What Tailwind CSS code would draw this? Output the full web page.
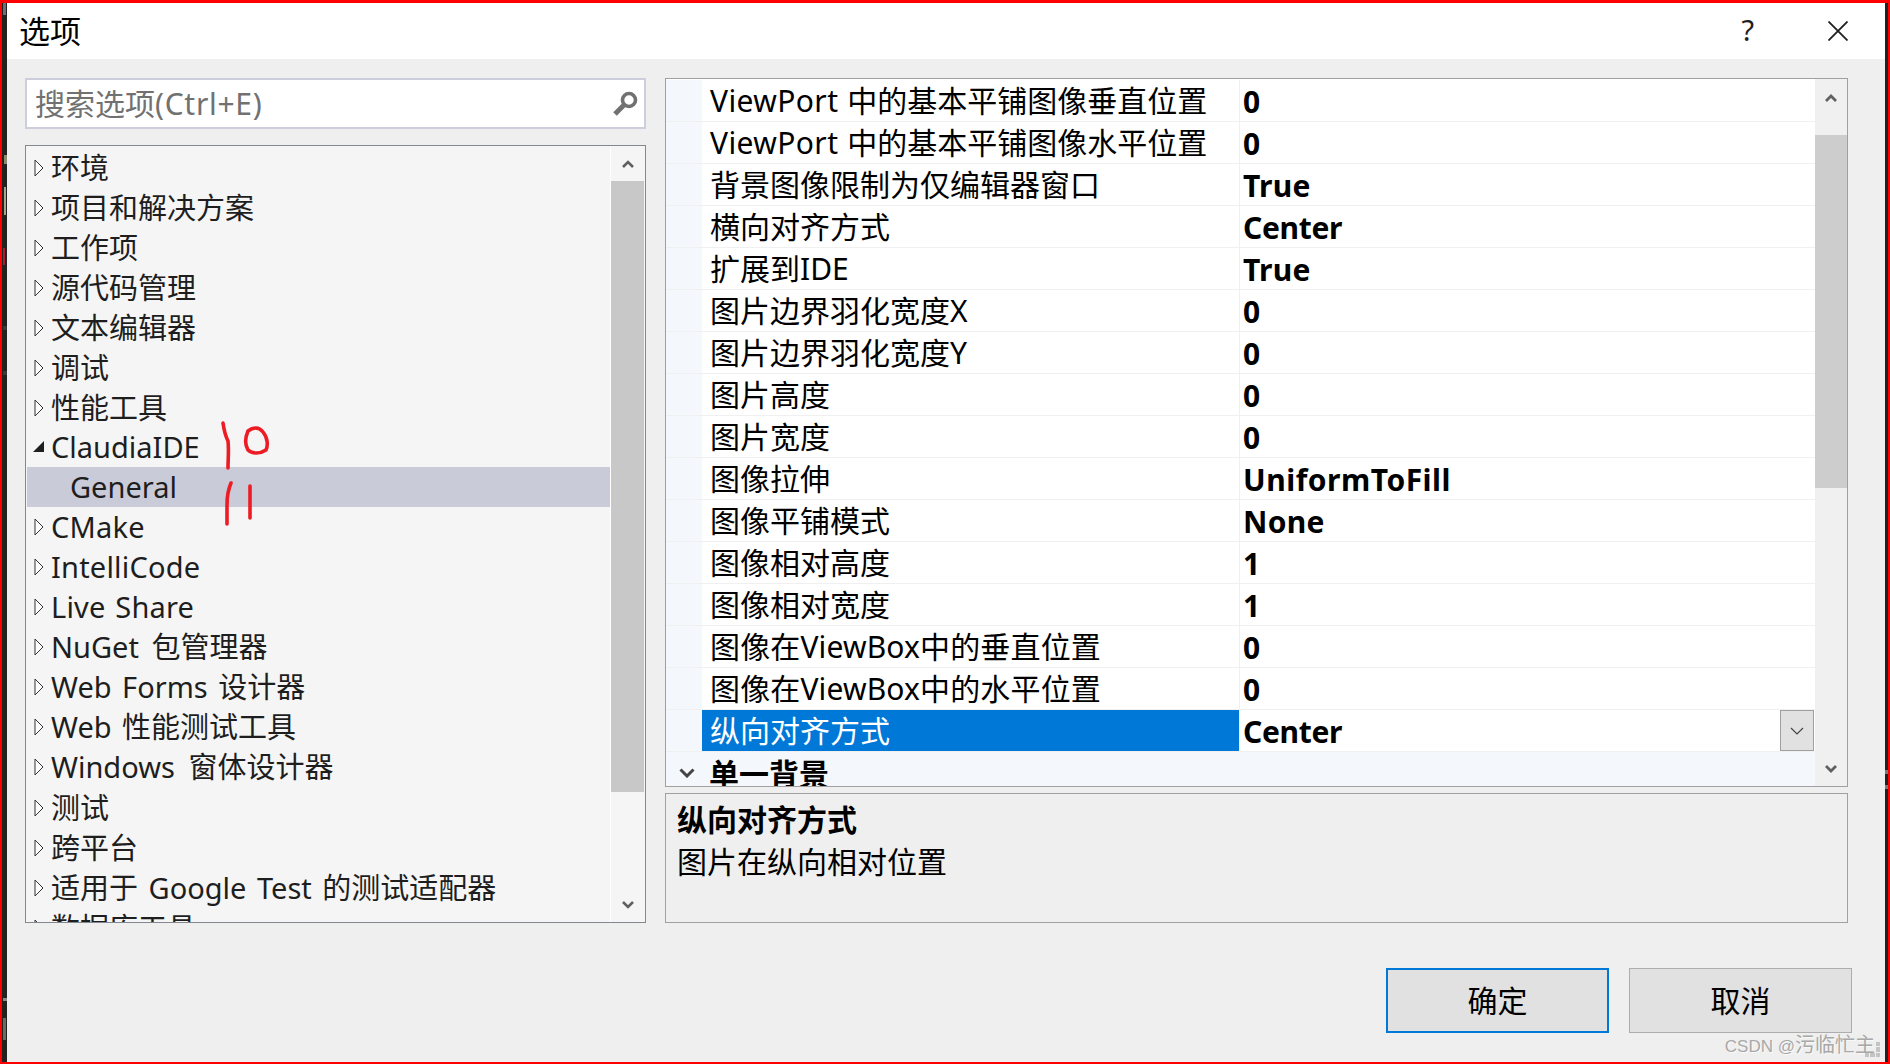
<!DOCTYPE html>
<html lang="zh-CN">
<head>
    <meta charset="UTF-8">
    <title>选项</title>
    <script src="https://cdn.jsdelivr.net/npm/@tailwindcss/browser@4"></script>
</head>
<body class="m-0 overflow-hidden">
<div class="relative w-[1890px] h-[1064px] overflow-hidden flex bg-[#222222] border-t-[3px] border-l-[2px] border-r-[2px] border-b-[2px] border-[#ff0000] font-['Noto_Sans','Noto_Sans_CJK_SC',sans-serif] text-[29px] text-[#1e1e1e]">
    <div class="w-[5px] shrink-0"></div>
    <div class="w-[1878px] h-[1059px] shrink-0 flex flex-col bg-[#efefef]">
        <!-- title bar -->
        <div class="h-[56px] bg-white flex items-center pl-[12px] shrink-0">
            <span class="text-[31px] text-black leading-none">选项</span>
            <span class="ml-auto text-[29px] leading-none text-[#1e1e1e] pb-[3px]">?</span>
            <svg class="ml-[74px] mr-[37px]" width="20" height="20" viewBox="0 0 20 20"><path d="M0.5 0.5L19.5 19.5M19.5 0.5L0.5 19.5" stroke="#1e1e1e" stroke-width="1.8" fill="none"/></svg>
        </div>

        <div class="flex gap-[19px] pl-[18px] pr-[37px] pt-[19px]">
            <!-- left column -->
            <div class="w-[621px] flex flex-col gap-[16px] shrink-0">
                <div class="h-[51px] bg-white border-2 border-[#cccedb] flex items-center pl-[8px] pr-[6px]">
                    <span class="text-[30px] text-[#717171] leading-none whitespace-nowrap">搜索选项<span class="tracking-[0.7px]">(Ctrl+E)</span></span>
                    <svg class="ml-auto" width="26" height="26" viewBox="0 0 26 26"><circle cx="17" cy="9" r="6.5" stroke="#717171" stroke-width="3.6" fill="none"/><path d="M12 14L3 23" stroke="#717171" stroke-width="5" fill="none"/></svg>
                </div>
                <div class="h-[778px] bg-[#f5f5f5] border border-[#828790] flex overflow-hidden">
                    <div class="w-[584px] shrink-0 pt-[1px] pl-[1px] overflow-hidden">
                        <div class="h-[40px] pt-[2px] flex items-center whitespace-nowrap"><svg class="ml-[7px] mr-[7px] shrink-0" width="10" height="18" viewBox="0 0 10 18"><path d="M1 1L9 9L1 17Z" fill="#fff" stroke="#333" stroke-width="1"/></svg>环境</div>
                        <div class="h-[40px] pt-[2px] flex items-center whitespace-nowrap"><svg class="ml-[7px] mr-[7px] shrink-0" width="10" height="18" viewBox="0 0 10 18"><path d="M1 1L9 9L1 17Z" fill="#fff" stroke="#333" stroke-width="1"/></svg>项目和解决方案</div>
                        <div class="h-[40px] pt-[2px] flex items-center whitespace-nowrap"><svg class="ml-[7px] mr-[7px] shrink-0" width="10" height="18" viewBox="0 0 10 18"><path d="M1 1L9 9L1 17Z" fill="#fff" stroke="#333" stroke-width="1"/></svg>工作项</div>
                        <div class="h-[40px] pt-[2px] flex items-center whitespace-nowrap"><svg class="ml-[7px] mr-[7px] shrink-0" width="10" height="18" viewBox="0 0 10 18"><path d="M1 1L9 9L1 17Z" fill="#fff" stroke="#333" stroke-width="1"/></svg>源代码管理</div>
                        <div class="h-[40px] pt-[2px] flex items-center whitespace-nowrap"><svg class="ml-[7px] mr-[7px] shrink-0" width="10" height="18" viewBox="0 0 10 18"><path d="M1 1L9 9L1 17Z" fill="#fff" stroke="#333" stroke-width="1"/></svg>文本编辑器</div>
                        <div class="h-[40px] pt-[2px] flex items-center whitespace-nowrap"><svg class="ml-[7px] mr-[7px] shrink-0" width="10" height="18" viewBox="0 0 10 18"><path d="M1 1L9 9L1 17Z" fill="#fff" stroke="#333" stroke-width="1"/></svg>调试</div>
                        <div class="h-[40px] pt-[2px] flex items-center whitespace-nowrap"><svg class="ml-[7px] mr-[7px] shrink-0" width="10" height="18" viewBox="0 0 10 18"><path d="M1 1L9 9L1 17Z" fill="#fff" stroke="#333" stroke-width="1"/></svg>性能工具</div>
                        <div class="h-[40px] flex items-center whitespace-nowrap"><svg class="ml-[6px] mr-[6px] shrink-0" width="12" height="18" viewBox="0 0 12 18"><path d="M0 14L11 3V14Z" fill="#1e1e1e"/></svg>ClaudiaIDE</div>
                        <div class="h-[40px] flex items-center whitespace-nowrap bg-[#cacbd9] pl-[43px]">General</div>
                        <div class="h-[40px] flex items-center whitespace-nowrap tracking-[0.2px]"><svg class="ml-[7px] mr-[7px] shrink-0" width="10" height="18" viewBox="0 0 10 18"><path d="M1 1L9 9L1 17Z" fill="#fff" stroke="#333" stroke-width="1"/></svg>CMake</div>
                        <div class="h-[40px] flex items-center whitespace-nowrap tracking-[0.2px]"><svg class="ml-[7px] mr-[7px] shrink-0" width="10" height="18" viewBox="0 0 10 18"><path d="M1 1L9 9L1 17Z" fill="#fff" stroke="#333" stroke-width="1"/></svg>IntelliCode</div>
                        <div class="h-[40px] flex items-center whitespace-pre tracking-[0.2px] [word-spacing:2px]"><svg class="ml-[7px] mr-[7px] shrink-0" width="10" height="18" viewBox="0 0 10 18"><path d="M1 1L9 9L1 17Z" fill="#fff" stroke="#333" stroke-width="1"/></svg>Live Share</div>
                        <div class="h-[40px] flex items-center whitespace-pre [word-spacing:5px]"><svg class="ml-[7px] mr-[7px] shrink-0" width="10" height="18" viewBox="0 0 10 18"><path d="M1 1L9 9L1 17Z" fill="#fff" stroke="#333" stroke-width="1"/></svg>NuGet 包管理器</div>
                        <div class="h-[40px] flex items-center whitespace-pre [word-spacing:3px]"><svg class="ml-[7px] mr-[7px] shrink-0" width="10" height="18" viewBox="0 0 10 18"><path d="M1 1L9 9L1 17Z" fill="#fff" stroke="#333" stroke-width="1"/></svg>Web Forms 设计器</div>
                        <div class="h-[40px] flex items-center whitespace-pre [word-spacing:3px]"><svg class="ml-[7px] mr-[7px] shrink-0" width="10" height="18" viewBox="0 0 10 18"><path d="M1 1L9 9L1 17Z" fill="#fff" stroke="#333" stroke-width="1"/></svg>Web 性能测试工具</div>
                        <div class="h-[40px] flex items-center whitespace-pre [word-spacing:6px]"><svg class="ml-[7px] mr-[7px] shrink-0" width="10" height="18" viewBox="0 0 10 18"><path d="M1 1L9 9L1 17Z" fill="#fff" stroke="#333" stroke-width="1"/></svg>Windows 窗体设计器</div>
                        <div class="h-[40px] pt-[2px] flex items-center whitespace-nowrap"><svg class="ml-[7px] mr-[7px] shrink-0" width="10" height="18" viewBox="0 0 10 18"><path d="M1 1L9 9L1 17Z" fill="#fff" stroke="#333" stroke-width="1"/></svg>测试</div>
                        <div class="h-[40px] pt-[2px] flex items-center whitespace-nowrap"><svg class="ml-[7px] mr-[7px] shrink-0" width="10" height="18" viewBox="0 0 10 18"><path d="M1 1L9 9L1 17Z" fill="#fff" stroke="#333" stroke-width="1"/></svg>跨平台</div>
                        <div class="h-[40px] pt-[2px] flex items-center whitespace-pre [word-spacing:3px]"><svg class="ml-[7px] mr-[7px] shrink-0" width="10" height="18" viewBox="0 0 10 18"><path d="M1 1L9 9L1 17Z" fill="#fff" stroke="#333" stroke-width="1"/></svg>适用于 Google Test 的测试适配器</div>
                        <div class="h-[40px] pt-[2px] flex items-center whitespace-nowrap"><svg class="ml-[7px] mr-[7px] shrink-0" width="10" height="18" viewBox="0 0 10 18"><path d="M1 1L9 9L1 17Z" fill="#fff" stroke="#333" stroke-width="1"/></svg>数据库工具</div>
                    </div>
                    <!-- tree scrollbar -->
                    <div class="w-[35px] shrink-0 flex flex-col border-l border-white pr-[1px]">
                        <div class="h-[35px] flex items-center justify-center shrink-0 w-full"><svg width="12" height="8" viewBox="0 0 12 8"><path d="M1 7L6 2L11 7" stroke="#606060" stroke-width="2.6" fill="none"/></svg></div>
                        <div class="w-[33px] h-[611px] bg-[#c8c8c8] shrink-0"></div>
                        <div class="h-[130px] w-full flex items-center justify-center pt-[95px]"><svg width="12" height="8" viewBox="0 0 12 8"><path d="M1 1L6 6L11 1" stroke="#606060" stroke-width="2.6" fill="none"/></svg></div>
                    </div>
                </div>
            </div>

            <!-- right column -->
            <div class="w-[1183px] flex flex-col gap-[6px] shrink-0">
                <div class="h-[709px] bg-white border border-[#a0a0a0] flex overflow-hidden">
                    <div class="w-[1149px] shrink-0 overflow-hidden text-black text-[30px] pt-[1px]">
                        <div class="h-[42px] flex items-center border-b border-[#f0f0f0] bg-white"><div class="w-[36px] h-full bg-[#f4f7fb] shrink-0"></div><div class="w-[537px] pl-[8px] whitespace-pre [word-spacing:1px]"><span class="tracking-[0.4px]">ViewPort</span> 中的基本平铺图像垂直位置</div><div class="pl-[3px] pt-[2px] font-bold border-l border-[#f0f0f0] h-full flex items-center">0</div></div>
                        <div class="h-[42px] flex items-center border-b border-[#f0f0f0] bg-white"><div class="w-[36px] h-full bg-[#f4f7fb] shrink-0"></div><div class="w-[537px] pl-[8px] whitespace-pre [word-spacing:1px]"><span class="tracking-[0.4px]">ViewPort</span> 中的基本平铺图像水平位置</div><div class="pl-[3px] pt-[2px] font-bold border-l border-[#f0f0f0] h-full flex items-center">0</div></div>
                        <div class="h-[42px] flex items-center border-b border-[#f0f0f0] bg-white"><div class="w-[36px] h-full bg-[#f4f7fb] shrink-0"></div><div class="w-[537px] pl-[8px]">背景图像限制为仅编辑器窗口</div><div class="pl-[3px] pt-[2px] font-bold border-l border-[#f0f0f0] h-full flex items-center tracking-[0.3px]">True</div></div>
                        <div class="h-[42px] flex items-center border-b border-[#f0f0f0] bg-white"><div class="w-[36px] h-full bg-[#f4f7fb] shrink-0"></div><div class="w-[537px] pl-[8px]">横向对齐方式</div><div class="pl-[3px] pt-[2px] font-bold border-l border-[#f0f0f0] h-full flex items-center tracking-[-0.3px]">Center</div></div>
                        <div class="h-[42px] flex items-center border-b border-[#f0f0f0] bg-white"><div class="w-[36px] h-full bg-[#f4f7fb] shrink-0"></div><div class="w-[537px] pl-[8px]">扩展到IDE</div><div class="pl-[3px] pt-[2px] font-bold border-l border-[#f0f0f0] h-full flex items-center tracking-[0.3px]">True</div></div>
                        <div class="h-[42px] flex items-center border-b border-[#f0f0f0] bg-white"><div class="w-[36px] h-full bg-[#f4f7fb] shrink-0"></div><div class="w-[537px] pl-[8px]">图片边界羽化宽度X</div><div class="pl-[3px] pt-[2px] font-bold border-l border-[#f0f0f0] h-full flex items-center">0</div></div>
                        <div class="h-[42px] flex items-center border-b border-[#f0f0f0] bg-white"><div class="w-[36px] h-full bg-[#f4f7fb] shrink-0"></div><div class="w-[537px] pl-[8px]">图片边界羽化宽度Y</div><div class="pl-[3px] pt-[2px] font-bold border-l border-[#f0f0f0] h-full flex items-center">0</div></div>
                        <div class="h-[42px] flex items-center border-b border-[#f0f0f0] bg-white"><div class="w-[36px] h-full bg-[#f4f7fb] shrink-0"></div><div class="w-[537px] pl-[8px]">图片高度</div><div class="pl-[3px] pt-[2px] font-bold border-l border-[#f0f0f0] h-full flex items-center">0</div></div>
                        <div class="h-[42px] flex items-center border-b border-[#f0f0f0] bg-white"><div class="w-[36px] h-full bg-[#f4f7fb] shrink-0"></div><div class="w-[537px] pl-[8px]">图片宽度</div><div class="pl-[3px] pt-[2px] font-bold border-l border-[#f0f0f0] h-full flex items-center">0</div></div>
                        <div class="h-[42px] flex items-center border-b border-[#f0f0f0] bg-white"><div class="w-[36px] h-full bg-[#f4f7fb] shrink-0"></div><div class="w-[537px] pl-[8px]">图像拉伸</div><div class="pl-[3px] pt-[2px] font-bold border-l border-[#f0f0f0] h-full flex items-center tracking-[0.5px]">UniformToFill</div></div>
                        <div class="h-[42px] flex items-center border-b border-[#f0f0f0] bg-white"><div class="w-[36px] h-full bg-[#f4f7fb] shrink-0"></div><div class="w-[537px] pl-[8px]">图像平铺模式</div><div class="pl-[3px] pt-[2px] font-bold border-l border-[#f0f0f0] h-full flex items-center tracking-[0.3px]">None</div></div>
                        <div class="h-[42px] flex items-center border-b border-[#f0f0f0] bg-white"><div class="w-[36px] h-full bg-[#f4f7fb] shrink-0"></div><div class="w-[537px] pl-[8px]">图像相对高度</div><div class="pl-[3px] pt-[2px] font-bold border-l border-[#f0f0f0] h-full flex items-center">1</div></div>
                        <div class="h-[42px] flex items-center border-b border-[#f0f0f0] bg-white"><div class="w-[36px] h-full bg-[#f4f7fb] shrink-0"></div><div class="w-[537px] pl-[8px]">图像相对宽度</div><div class="pl-[3px] pt-[2px] font-bold border-l border-[#f0f0f0] h-full flex items-center">1</div></div>
                        <div class="h-[42px] flex items-center border-b border-[#f0f0f0] bg-white"><div class="w-[36px] h-full bg-[#f4f7fb] shrink-0"></div><div class="w-[537px] pl-[8px] tracking-[0.15px]">图像在ViewBox中的垂直位置</div><div class="pl-[3px] pt-[2px] font-bold border-l border-[#f0f0f0] h-full flex items-center">0</div></div>
                        <div class="h-[42px] flex items-center border-b border-[#f0f0f0] bg-white"><div class="w-[36px] h-full bg-[#f4f7fb] shrink-0"></div><div class="w-[537px] pl-[8px] tracking-[0.15px]">图像在ViewBox中的水平位置</div><div class="pl-[3px] pt-[2px] font-bold border-l border-[#f0f0f0] h-full flex items-center">0</div></div>
                        <div class="h-[42px] flex items-center border-b border-[#f0f0f0] bg-white"><div class="w-[36px] h-full bg-[#f4f7fb] shrink-0"></div><div class="w-[537px] pl-[8px] h-full flex items-center bg-[#0078d7] text-white">纵向对齐方式</div><div class="pl-[3px] pt-[2px] font-bold border-l border-[#f0f0f0] h-full flex items-center tracking-[-0.3px]">Center</div>
                            <div class="ml-auto mr-[1px] w-[34px] h-[41px] bg-[#e1e1e1] border border-[#a0a0a0] flex items-center justify-center"><svg width="14" height="8" viewBox="0 0 14 8"><path d="M1 1L7 7L13 1" stroke="#444" stroke-width="1.2" fill="none"/></svg></div>
                        </div>
                        <div class="h-[42px] flex items-center bg-[#f4f7fb] font-bold"><svg class="ml-[13px] mr-[14px] shrink-0" width="16" height="10" viewBox="0 0 16 10"><path d="M1.5 1.5L8 8L14.5 1.5" stroke="#444" stroke-width="3" fill="none"/></svg>单一背景</div>
                    </div>
                    <!-- grid scrollbar -->
                    <div class="w-[32px] bg-[#f0f0f0] shrink-0 flex flex-col">
                        <div class="h-[56px] flex items-center justify-center shrink-0 pb-[18px]"><svg width="12" height="8" viewBox="0 0 12 8"><path d="M1 7L6 2L11 7" stroke="#606060" stroke-width="2.8" fill="none"/></svg></div>
                        <div class="h-[353px] bg-[#cdcdcd] shrink-0"></div>
                        <div class="mt-auto h-[36px] flex items-center justify-center pt-[2px]"><svg width="12" height="8" viewBox="0 0 12 8"><path d="M1 1L6 6L11 1" stroke="#606060" stroke-width="2.8" fill="none"/></svg></div>
                    </div>
                </div>
                <div class="h-[130px] border border-[#a0a0a0] pl-[11px] pt-[5px] text-[30px] text-black leading-[42px]">
                    <div class="font-bold">纵向对齐方式</div>
                    <div>图片在纵向相对位置</div>
                </div>
            </div>
        </div>

        <!-- footer buttons -->
        <div class="flex justify-end gap-[20px] pr-[33px] mt-[45px] text-[30px]">
            <div class="w-[223px] h-[65px] bg-[#e1e1e1] border-2 border-[#0078d7] flex items-center justify-center text-black">确定</div>
            <div class="w-[223px] h-[65px] bg-[#e1e1e1] border border-[#adadad] flex items-center justify-center text-black">取消</div>
        </div>
    </div>
    <div class="w-[3px] shrink-0"></div>

    <!-- desktop code showing in the strips beside the dialog -->
    <i class="absolute left-[1px] top-[0px] w-[3px] h-[12px] bg-[#6b7078]"></i>
    <i class="absolute left-[2px] top-[152px] w-[3px] h-[9px] bg-[#8a8a70]"></i>
    <i class="absolute left-[2px] top-[184px] w-[2px] h-[28px] bg-[#a8a488]"></i>
    <i class="absolute left-[1px] top-[245px] w-[2px] h-[17px] bg-[#a02030]"></i>
    <i class="absolute left-[1px] top-[323px] w-[4px] h-[4px] bg-[#3a3a3a]"></i>
    <i class="absolute left-[1px] top-[368px] w-[4px] h-[4px] bg-[#3a3a3a]"></i>
    <i class="absolute left-[1px] top-[995px] w-[4px] h-[3px] bg-[#8a8a8a]"></i>
    <i class="absolute left-[1px] top-[1015px] w-[3px] h-[22px] bg-[#6a6a6a]"></i>
    <i class="absolute right-[0px] top-[767px] w-[3px] h-[4px] bg-[#7a7a7a]"></i>
    <i class="absolute right-[0px] top-[782px] w-[3px] h-[4px] bg-[#7a7a7a]"></i>

    <!-- hand written marks drawn over the dialog -->
    <svg class="absolute left-[-2px] top-[-3px] pointer-events-none" width="1890" height="1064" viewBox="0 0 1890 1064">
        <g fill="none" stroke="#ed1c24" stroke-width="3.6" stroke-linecap="round" stroke-linejoin="round">
            <path d="M223 423C224 430 225 435 228 441C229 450 228 460 228 468"/>
            <path d="M248 431C253 427 259 427 263 432C268 438 268 446 266 450C260 454 252 454 248 450C245 445 245 438 248 431"/>
            <path d="M231 483C228 490 227 497 227 505C227 512 227 518 227 524"/>
            <path d="M250 486V518"/>
        </g>
    </svg>
    <!-- watermark -->
    <div class="absolute right-[13px] bottom-[5px] text-[17px] leading-[20px] whitespace-pre text-[#a8a8a8] [text-shadow:1px_1px_0_#ffffffaa] font-['Liberation_Sans','Noto_Sans_CJK_SC',sans-serif]">CSDN @<span class="text-[20px]">污临忙主</span></div>
    <div class="absolute right-[8px] bottom-[5px] w-[15px] h-[15px] grid grid-cols-3 grid-rows-3 gap-[1px]">
        <i></i><i></i><i class="bg-[#c4c4c4]"></i>
        <i></i><i></i><i class="bg-[#c4c4c4]"></i>
        <i class="bg-[#c4c4c4]"></i><i class="bg-[#c4c4c4]"></i><i class="bg-[#c4c4c4]"></i>
    </div>
</div>
</body>
</html>
